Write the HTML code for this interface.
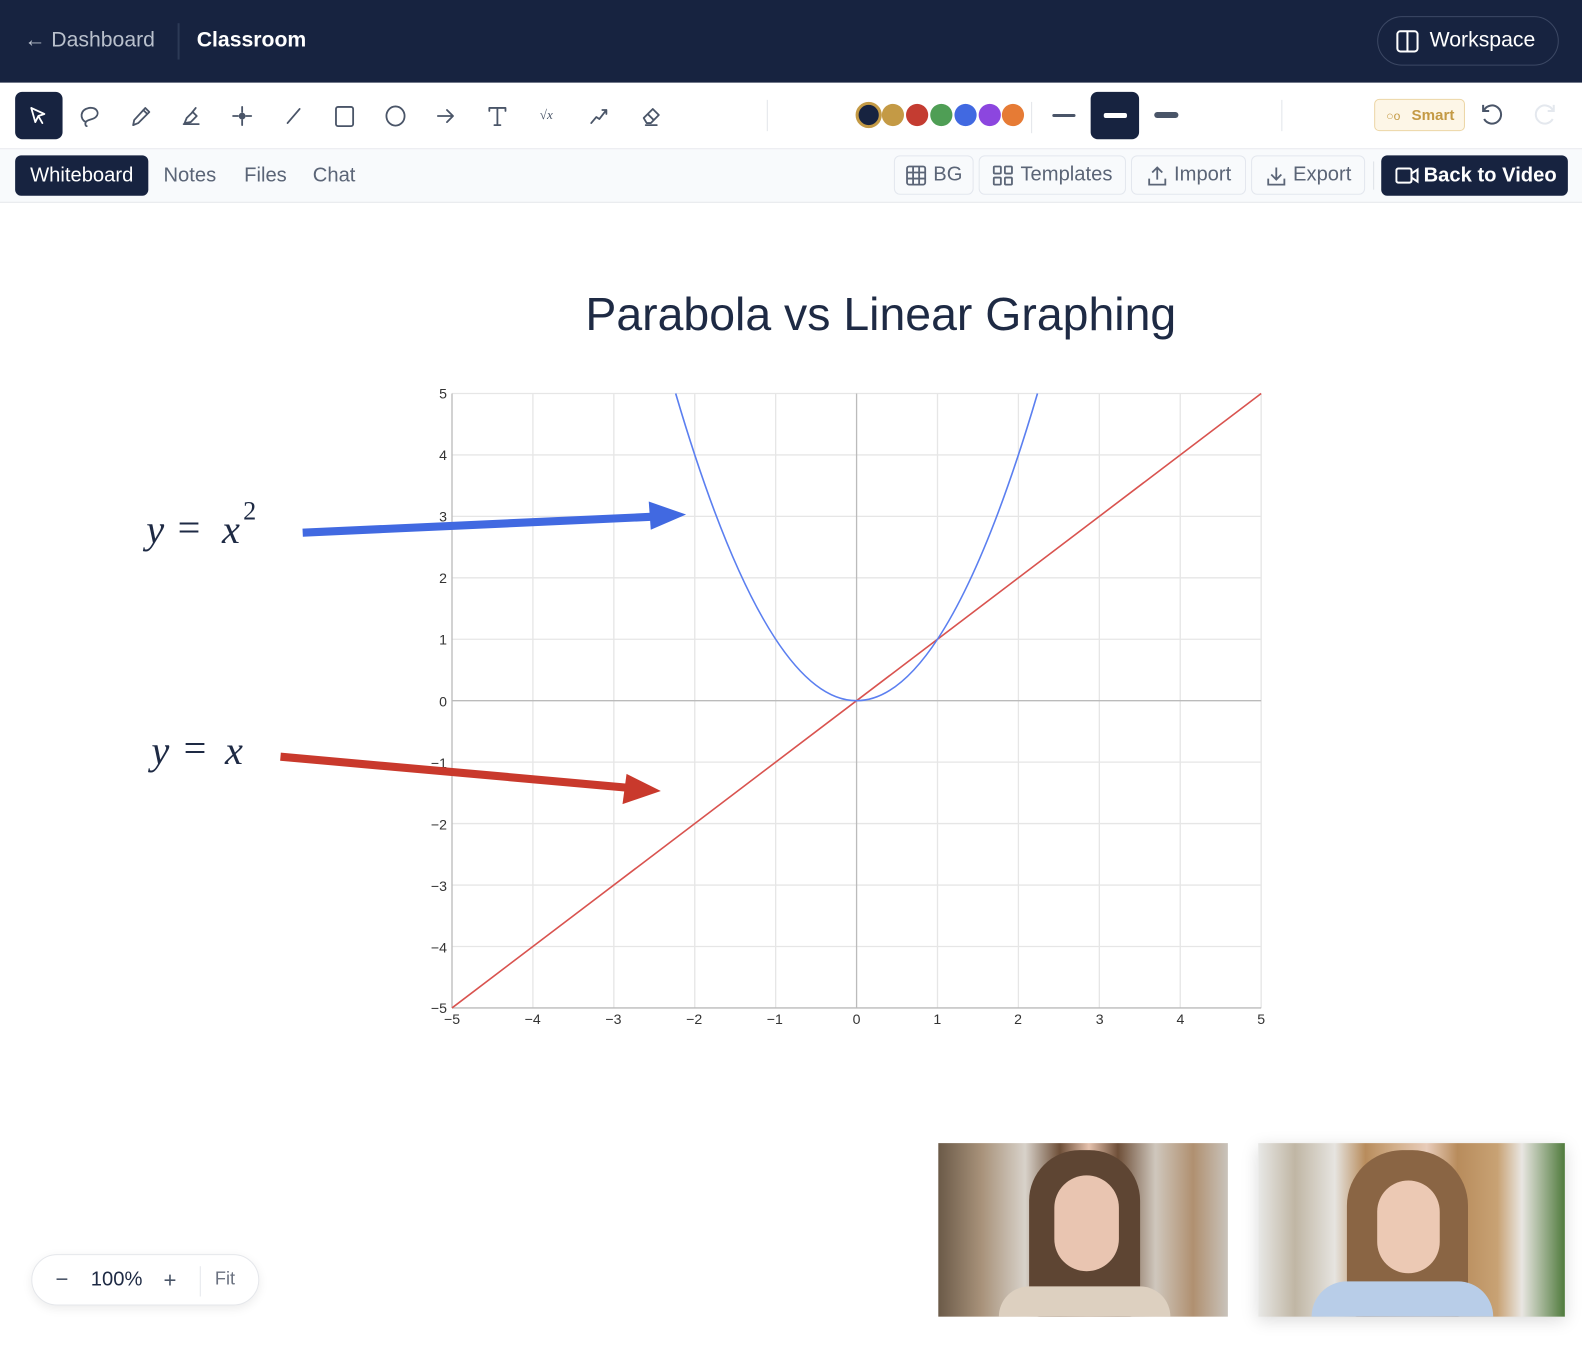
<!DOCTYPE html>
<html><head><meta charset="utf-8"><style>
*{box-sizing:border-box;margin:0;padding:0}
body{width:1582px;height:1335px;background:#fff;font-family:"Liberation Sans",sans-serif;position:relative;overflow:hidden}
#w{position:absolute;left:0;top:0;width:1568px;height:1323px;transform:scale(1.00893);transform-origin:0 0}
.a{position:absolute}
.hdr{left:0;top:0;width:1582px;height:82px;background:#172340}
.tb{left:0;top:82px;width:1582px;height:66px;background:#fff;border-bottom:1px solid #e5e7eb}
.tabs{left:0;top:148px;width:1582px;height:53px;background:#f8fafc;border-bottom:1px solid #e5e7eb}
.ic{position:absolute;top:100px;width:30px;height:30px}
.ic svg{width:30px;height:30px;fill:none;stroke:#4a5568;stroke-width:1.8;stroke-linecap:round;stroke-linejoin:round}
.btn{position:absolute;top:154px;height:39px;border:1px solid #e3e7ee;border-radius:6px;background:#f8fafc;color:#5b6577;font-size:20px;display:flex;align-items:center;justify-content:center;gap:6px}
.btn svg{width:22px;height:22px;fill:none;stroke:#5b6577;stroke-width:1.8}
.dot{position:absolute;top:103px;width:22px;height:22px;border-radius:50%}
</style></head><body><div id="w">
<div class="a hdr"></div>
<div class="a" style="left:24px;top:28px;font-size:21px;color:#b9c0cc">← Dashboard</div>
<div class="a" style="left:176px;top:23px;width:2px;height:36px;background:#2c3a56"></div>
<div class="a" style="left:195px;top:28px;font-size:21px;color:#fff;font-weight:bold">Classroom</div>
<div class="a" style="left:1365px;top:16px;width:180px;height:49px;border:1px solid #3c4864;border-radius:25px;"></div>
<svg class="a" style="left:1383px;top:29px" width="24" height="24" viewBox="0 0 24 24"><rect x="2" y="2" width="20" height="20" rx="3" fill="none" stroke="#fff" stroke-width="2"/><line x1="12" y1="2" x2="12" y2="22" stroke="#fff" stroke-width="2"/></svg>
<div class="a" style="left:1417px;top:28px;font-size:21px;color:#fff">Workspace</div>

<div class="a tb"></div>
<div class="a" style="left:15px;top:91px;width:47px;height:47px;background:#172340;border-radius:7px"></div>
<div class="ic" style="left:23px"><svg viewBox="0 0 30 30" style="stroke:#fff"><path d="M8 7 L21 13 L15 15 L19 22 M8 7 L12 21 L15 15"/></svg></div>
<div class="ic" style="left:74px"><svg viewBox="0 0 30 30"><path d="M11 21 C5 18 5 9 14 7 C22 6 25 12 21 16 C18 19 13 18 11 21 C10 23 11 25 12 25"/></svg></div>
<div class="ic" style="left:124px"><svg viewBox="0 0 30 30"><path d="M8 24 L9 19 L20 7 L24 11 L13 22 Z M18 9 L22 13"/></svg></div>
<div class="ic" style="left:175px"><svg viewBox="0 0 30 30"><path d="M7 23 L22 23 M8 22 L10 17 L16 11 L20 15 L14 21 Z M15 12 L19 7"/></svg></div>
<div class="ic" style="left:225px"><svg viewBox="0 0 30 30"><path d="M15 6 L15 11 M15 19 L15 24 M6 15 L11 15 M19 15 L24 15"/><circle cx="15" cy="15" r="2.5" fill="#4a5568"/></svg></div>
<div class="ic" style="left:276px"><svg viewBox="0 0 30 30"><path d="M9 22 L21 8"/></svg></div>
<div class="ic" style="left:326px"><svg viewBox="0 0 30 30"><rect x="7" y="6" width="17" height="19" rx="2"/></svg></div>
<div class="ic" style="left:377px"><svg viewBox="0 0 30 30"><ellipse cx="15" cy="15" rx="9" ry="9.5"/></svg></div>
<div class="ic" style="left:427px"><svg viewBox="0 0 30 30"><path d="M7 15 L22 15 M16 9 L22 15 L16 21"/></svg></div>
<div class="ic" style="left:478px"><svg viewBox="0 0 30 30"><path d="M7 7 L23 7 M15 7 L15 24 M7 7 L7 10 M23 7 L23 10 M12 24 L18 24"/></svg></div>
<div class="a" style="left:535px;top:106px;font-family:'Liberation Serif',serif;font-size:13px;color:#4a5568;font-style:italic">√x</div>
<div class="ic" style="left:579px"><svg viewBox="0 0 30 30"><path d="M7 22 L12 16 L15 18 L22 9 M18 9 L22 9 L22 13"/></svg></div>
<div class="ic" style="left:630px"><svg viewBox="0 0 30 30"><path d="M8 17 L17 8 L23 14 L15 22 L11 22 Z M12 13 L18 19 M10 24 L21 24"/></svg></div>
<div class="a" style="left:760px;top:99px;width:1px;height:31px;background:#e2e5ea"></div>
<div class="dot" style="left:848px;top:101px;width:26px;height:26px;background:#172340;border:3px solid #c49a45"></div>
<div class="dot" style="left:874px;background:#c49a45"></div>
<div class="dot" style="left:898px;background:#c43c31"></div>
<div class="dot" style="left:922px;background:#4f9e55"></div>
<div class="dot" style="left:946px;background:#4169e1"></div>
<div class="dot" style="left:970px;background:#8c46df"></div>
<div class="dot" style="left:993px;background:#e67b35"></div>
<div class="a" style="left:1022px;top:101px;width:1px;height:31px;background:#e2e5ea"></div>
<div class="a" style="left:1043px;top:113px;width:23px;height:3px;background:#4a5568;border-radius:2px"></div>
<div class="a" style="left:1081px;top:91px;width:48px;height:47px;background:#172340;border-radius:7px"></div>
<div class="a" style="left:1094px;top:112px;width:23px;height:5px;background:#fff;border-radius:2px"></div>
<div class="a" style="left:1144px;top:111px;width:24px;height:6px;background:#4a5568;border-radius:3px"></div>
<div class="a" style="left:1270px;top:99px;width:1px;height:31px;background:#e2e5ea"></div>
<div class="a" style="left:1362px;top:98px;width:90px;height:32px;background:#fdf6e7;border:1px solid #ecd6a6;border-radius:5px;color:#c49a45;font-size:15px;font-weight:bold;padding:7px 0 0 36px">Smart</div>
<div class="a" style="left:1374px;top:108px;color:#c49a45;font-size:12px">○o</div>
<svg class="a" style="left:1466px;top:101px" width="26" height="26" viewBox="0 0 26 26" fill="none" stroke="#4a5568" stroke-width="2"><path d="M5 8 A9 9 0 1 1 5 17 M4 3 L4 9 L10 9"/></svg>
<svg class="a" style="left:1518px;top:101px" width="26" height="26" viewBox="0 0 26 26" fill="none" stroke="#e4e8ee" stroke-width="2"><path d="M21 8 A9 9 0 1 0 21 17 M22 3 L22 9 L16 9"/></svg>

<div class="a tabs"></div>
<div class="a" style="left:15px;top:154px;width:132px;height:40px;background:#172340;border-radius:6px;color:#fff;font-size:20px;text-align:center;line-height:40px">Whiteboard</div>
<div class="a" style="left:162px;top:163px;font-size:20px;color:#5b6577">Notes</div>
<div class="a" style="left:242px;top:163px;font-size:20px;color:#5b6577">Files</div>
<div class="a" style="left:310px;top:163px;font-size:20px;color:#5b6577">Chat</div>
<div class="btn" style="left:886px;width:79px"><svg viewBox="0 0 22 22"><rect x="2" y="2" width="18" height="18" rx="2"/><path d="M8 2V20M14 2V20M2 8H20M2 14H20"/></svg>BG</div>
<div class="btn" style="left:970px;width:146px"><svg viewBox="0 0 22 22"><rect x="2" y="2" width="7" height="7" rx="1"/><rect x="13" y="2" width="7" height="7" rx="1"/><rect x="2" y="13" width="7" height="7" rx="1"/><rect x="13" y="13" width="7" height="7" rx="1"/></svg>Templates</div>
<div class="btn" style="left:1121px;width:114px"><svg viewBox="0 0 22 22"><path d="M11 15V3M6 8L11 3L16 8M3 14V20H19V14"/></svg>Import</div>
<div class="btn" style="left:1240px;width:113px"><svg viewBox="0 0 22 22"><path d="M11 3V15M6 10L11 15L16 10M3 14V20H19V14"/></svg>Export</div>
<div class="a" style="left:1361px;top:160px;width:1px;height:28px;background:#dde1e7"></div>
<div class="a" style="left:1369px;top:154px;width:185px;height:40px;background:#172340;border-radius:6px;color:#fff;font-size:20px;font-weight:bold;line-height:40px;padding-left:42px">Back to Video</div>
<svg class="a" style="left:1383px;top:164px" width="24" height="20" viewBox="0 0 24 20" fill="none" stroke="#fff" stroke-width="2"><rect x="1" y="3" width="15" height="14" rx="2"/><path d="M16 8L22 4V16L16 12"/></svg>

<div class="a" style="left:0;top:284px;width:1746px;text-align:center;font-size:46px;color:#1e2a44">Parabola vs Linear Graphing</div>

<svg class="a" style="left:0;top:0" width="1582" height="1335">
<g stroke="#e6e6e6" stroke-width="1.3">
<line x1="528.2" y1="390" x2="528.2" y2="999"/><line x1="608.4" y1="390" x2="608.4" y2="999"/><line x1="688.6" y1="390" x2="688.6" y2="999"/><line x1="768.8" y1="390" x2="768.8" y2="999"/><line x1="929.2" y1="390" x2="929.2" y2="999"/><line x1="1009.4" y1="390" x2="1009.4" y2="999"/><line x1="1089.6" y1="390" x2="1089.6" y2="999"/><line x1="1169.8" y1="390" x2="1169.8" y2="999"/><line x1="1250" y1="390" x2="1250" y2="999"/>
<line x1="448" y1="390" x2="1250" y2="390"/><line x1="448" y1="450.9" x2="1250" y2="450.9"/><line x1="448" y1="511.8" x2="1250" y2="511.8"/><line x1="448" y1="572.7" x2="1250" y2="572.7"/><line x1="448" y1="633.6" x2="1250" y2="633.6"/><line x1="448" y1="755.4" x2="1250" y2="755.4"/><line x1="448" y1="816.3" x2="1250" y2="816.3"/><line x1="448" y1="877.2" x2="1250" y2="877.2"/><line x1="448" y1="938.1" x2="1250" y2="938.1"/>
</g>
<g stroke="#bbb" stroke-width="1.3"><line x1="849" y1="390" x2="849" y2="999"/><line x1="448" y1="694.5" x2="1250" y2="694.5"/><line x1="448" y1="390" x2="448" y2="999"/><line x1="448" y1="999" x2="1250" y2="999"/></g>
<g font-family="Liberation Sans,sans-serif" font-size="14" fill="#333" text-anchor="end">
<text x="443" y="395">5</text><text x="443" y="456">4</text><text x="443" y="517">3</text><text x="443" y="578">2</text><text x="443" y="639">1</text><text x="443" y="700">0</text><text x="443" y="761">−1</text><text x="443" y="822">−2</text><text x="443" y="883">−3</text><text x="443" y="944">−4</text><text x="443" y="1004">−5</text></g>
<g font-family="Liberation Sans,sans-serif" font-size="14" fill="#333" text-anchor="middle">
<text x="448" y="1015">−5</text><text x="528" y="1015">−4</text><text x="608" y="1015">−3</text><text x="688" y="1015">−2</text><text x="768" y="1015">−1</text><text x="849" y="1015">0</text><text x="929" y="1015">1</text><text x="1009" y="1015">2</text><text x="1090" y="1015">3</text><text x="1170" y="1015">4</text><text x="1250" y="1015">5</text></g>
<line x1="448" y1="999" x2="1250" y2="390" stroke="#d9534f" stroke-width="1.6"/>
<path d="M669.7 390 Q849 999 1028.3 390" fill="none" stroke="#5b7ff0" stroke-width="1.6"/>
<line x1="300" y1="528" x2="650" y2="512" stroke="#4169e1" stroke-width="8"/>
<polygon points="643,497 680,510 645,525" fill="#4169e1"/>
<line x1="278" y1="750" x2="625" y2="781" stroke="#c9392c" stroke-width="8"/>
<polygon points="621,767 655,784 617,797" fill="#c9392c"/>
<g font-family="Liberation Serif,serif" font-style="italic" font-size="40" fill="#1e2a44">
<text x="145" y="538">y</text><text x="220" y="538">x</text><text x="150" y="757">y</text><text x="223" y="757">x</text></g>
<g font-family="Liberation Serif,serif" font-size="40" fill="#1e2a44"><text x="176" y="536">=</text><text x="182" y="755">=</text><text x="241" y="515" font-size="26">2</text></g>
</svg>

<div class="a" style="left:930px;top:1133px;width:287px;height:172px;background:linear-gradient(90deg,#6b5a48 0%,#a8927a 15%,#d8d2ca 30%,#6e4f38 42%,#e5c2ae 52%,#6e4f38 62%,#cfc7bd 75%,#b09070 88%,#c9c3bb 100%)"></div>
<div class="a" style="left:1020px;top:1140px;width:110px;height:165px;border-radius:50px 50px 10px 10px;background:#5e4533"></div>
<div class="a" style="left:1045px;top:1165px;width:64px;height:95px;border-radius:32px;background:#e9c5b1"></div>
<div class="a" style="left:990px;top:1275px;width:170px;height:30px;border-radius:40px 40px 0 0;background:#ddd0c0"></div>
<div class="a" style="left:1247px;top:1133px;width:304px;height:172px;box-shadow:0 4px 16px rgba(0,0,0,.15);background:linear-gradient(90deg,#e8e8e6 0%,#c0b6a4 12%,#e6e4e0 25%,#b88c5c 35%,#d3b08c 45%,#e8ccba 55%,#b88c5c 65%,#c8a274 78%,#e9e6e2 86%,#4f7a3c 100%)"></div>
<div class="a" style="left:1335px;top:1140px;width:120px;height:165px;border-radius:55px 55px 10px 10px;background:#8a6544"></div>
<div class="a" style="left:1365px;top:1170px;width:62px;height:92px;border-radius:31px;background:#ecc9b4"></div>
<div class="a" style="left:1300px;top:1270px;width:180px;height:35px;border-radius:40px 40px 0 0;background:#b8cde8"></div>

<div class="a" style="left:31px;top:1243px;width:226px;height:51px;border:1px solid #e5e7eb;border-radius:26px;background:#fff;box-shadow:0 3px 10px rgba(0,0,0,.08)"></div>
<div class="a" style="left:55px;top:1255px;font-size:22px;color:#4a5568">−</div>
<div class="a" style="left:90px;top:1257px;font-size:20px;color:#1e2a44">100%</div>
<div class="a" style="left:162px;top:1256px;font-size:22px;color:#4a5568">+</div>
<div class="a" style="left:198px;top:1255px;width:1px;height:30px;background:#e5e7eb"></div>
<div class="a" style="left:213px;top:1257px;font-size:18px;color:#6b7280">Fit</div>
</div></body></html>
